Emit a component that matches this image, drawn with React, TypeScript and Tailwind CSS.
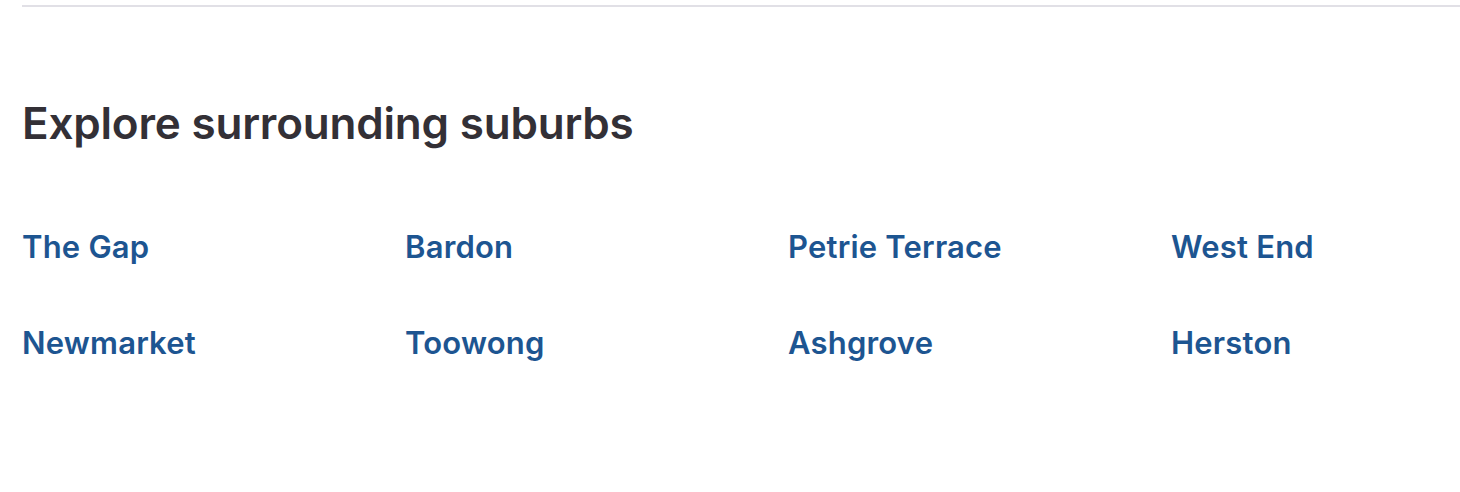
const suburbs = [
  "The Gap",
  "Bardon",
  "Petrie Terrace",
  "West End",
  "Newmarket",
  "Toowong",
  "Ashgrove",
  "Herston",
];

export default function App() {
  return (
    <div
      className="min-h-screen bg-white pl-[22px]"
      style={{ fontFamily: "Inter, 'Noto Sans', sans-serif" }}
    >
      <div className="pt-[5px]">
        <hr className="border-0 h-[2px] bg-[#e1e0e6]" />
      </div>

      <h2 className="mt-[90px] text-[44px] leading-[52px] font-semibold tracking-[-0.2px] text-[#333036]">
        Explore surrounding suburbs
      </h2>

      <ul className="mt-[78px] grid grid-cols-[383px_383px_383px_1fr] gap-y-[56px]">
        {suburbs.map((name) => (
          <li key={name}>
            <a href="#" className="text-[31px] leading-[40px] font-semibold tracking-[0.2px] text-[#1d5591]">
              {name}
            </a>
          </li>
        ))}
      </ul>
    </div>
  );
}
